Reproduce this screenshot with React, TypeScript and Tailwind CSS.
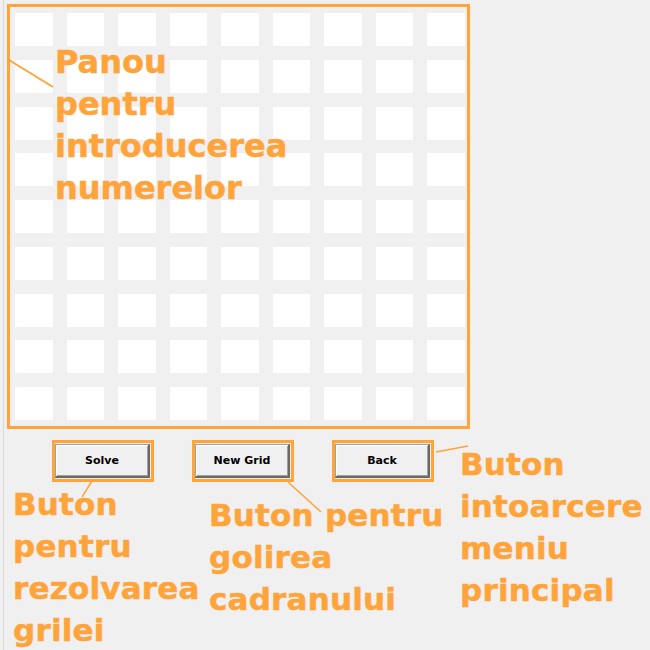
import React from "react";

const ORANGE = "#ffa43a";

function WinButton({ label }: { label: string }) {
  return (
    <div className="w-[102px] h-[42px] border-[3px] border-[#ffa43a] pl-0 pr-[1px] pt-[1px] pb-[1px] flex">
      <button className="flex-1 flex items-center justify-center bg-[#f0f0f0] border border-t-[#a0a0a0] border-l-[#a0a0a0] border-r-[#696969] border-b-[#696969] border-r-2 border-b-2 shadow-[inset_1px_1px_0_#ffffff,inset_-1px_-1px_0_#a0a0a0] text-[11px] font-bold text-black font-['DejaVu_Sans',sans-serif] leading-none">
        {label}
      </button>
    </div>
  );
}

function Label({ lines, className }: { lines: string[]; className: string }) {
  return (
    <div
      className={`absolute font-['DejaVu_Sans',sans-serif] font-bold leading-[42px] text-[#ffa43a] [-webkit-text-stroke:0.5px_#ffa43a] whitespace-nowrap ${className}`}
    >
      {lines.map((l, i) => (
        <div key={i}>{l}</div>
      ))}
    </div>
  );
}

export default function App() {
  const cells = Array.from({ length: 81 }, (_, i) => i);
  return (
    <div className="relative w-[650px] h-[650px] bg-[#f0f0f0] overflow-hidden">
      <div className="ml-[3px] h-full border-l border-[#d9d9d9] flex flex-col">
        <div className="ml-[3px] mt-[4px] w-[463px] h-[425px] border-[3px] border-[#ffa43a] pt-[6px] pl-[5px]">
          <div className="w-[450px] grid grid-cols-9 gap-x-[13.75px] gap-y-[13.75px]">
            {cells.map((c) => (
              <div key={c} className="h-[33px] bg-white" />
            ))}
          </div>
        </div>
        <div className="mt-[11px] ml-[48px] flex gap-[38px]">
          <WinButton label="Solve" />
          <WinButton label="New Grid" />
          <WinButton label="Back" />
        </div>
      </div>

      <svg className="absolute inset-0 pointer-events-none" width="650" height="650">
        <line x1="9" y1="60" x2="53" y2="87" stroke={ORANGE} strokeWidth="2" />
        <line x1="92" y1="481" x2="82" y2="497" stroke={ORANGE} strokeWidth="1.5" />
        <line x1="288" y1="482" x2="321" y2="512" stroke={ORANGE} strokeWidth="1.5" />
        <line x1="436" y1="452" x2="468" y2="446" stroke={ORANGE} strokeWidth="1.5" />
      </svg>

      <Label className="left-[55px] top-[41px] text-[32px]" lines={["Panou", "pentru", "introducerea", "numerelor"]} />
      <Label className="left-[13px] top-[483px] text-[31px] tracking-[0.2px]" lines={["Buton", "pentru", "rezolvarea", "grilei"]} />
      <Label className="left-[209px] top-[494px] text-[31px] tracking-[0.2px]" lines={["Buton pentru", "golirea", "cadranului"]} />
      <Label className="left-[460px] top-[443px] text-[31px] tracking-[0.2px]" lines={["Buton", "intoarcere", "meniu", "principal"]} />
    </div>
  );
}
